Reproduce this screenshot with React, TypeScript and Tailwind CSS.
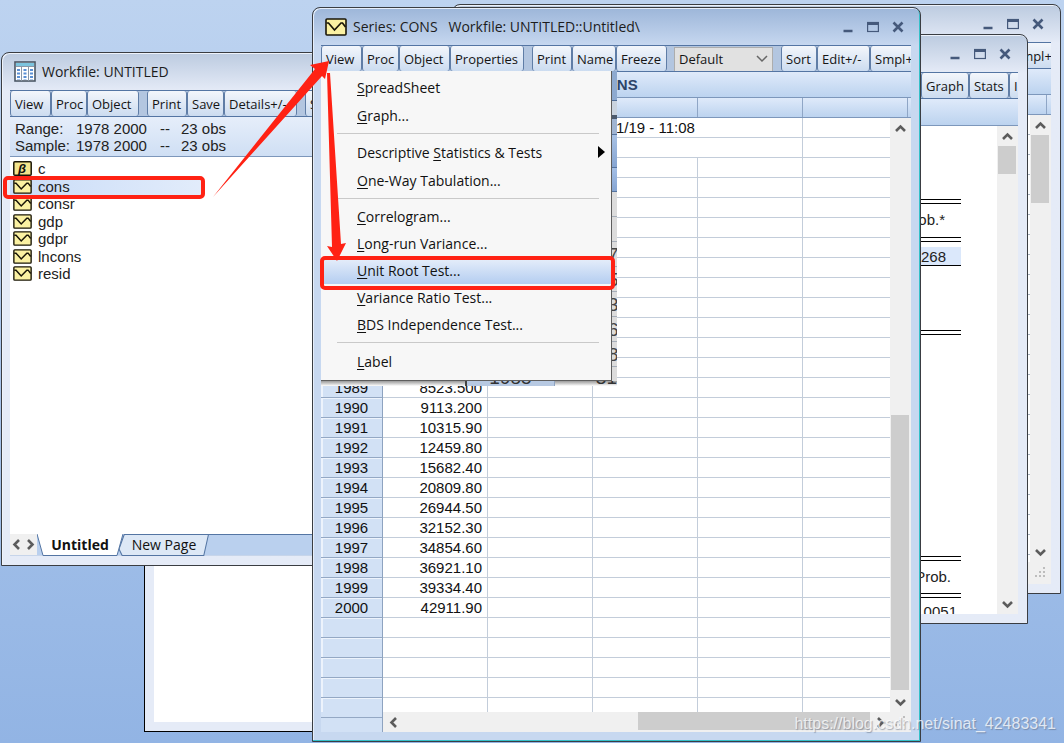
import React from 'react';
import { clsx } from 'clsx';

type Tool = { label: string; width: string; gap?: boolean };

const SERIES_TOOLS: Tool[] = [
  { label: 'View', width: 'w-[41px]' },
  { label: 'Proc', width: 'w-[37px]' },
  { label: 'Object', width: 'w-[51px]' },
  { label: 'Properties', width: 'w-[74px]' },
  { label: 'Print', width: 'w-[40px]', gap: true },
  { label: 'Name', width: 'w-[44px]' },
  { label: 'Freeze', width: 'w-[51px]' },
];

const SERIES_TOOLS_RIGHT: Tool[] = [
  { label: 'Sort', width: 'w-[36px]', gap: true },
  { label: 'Edit+/-', width: 'w-[53px]' },
  { label: 'Smpl+', width: 'w-[56px]' },
];

const WORKFILE_TOOLS: Tool[] = [
  { label: 'View', width: 'w-[41px]' },
  { label: 'Proc', width: 'w-[36px]' },
  { label: 'Object', width: 'w-[52px]' },
  { label: 'Print', width: 'w-[40px]', gap: true },
  { label: 'Save', width: 'w-[37px]' },
  { label: 'Details+/-', width: 'w-[73px]' },
  { label: 'Show', width: 'w-[44px]', gap: true },
];

const OBJECTS = ['c', 'cons', 'consr', 'gdp', 'gdpr', 'lncons', 'resid'];

const ROWS = [
  ['1989', '8523.500'],
  ['1990', '9113.200'],
  ['1991', '10315.90'],
  ['1992', '12459.80'],
  ['1993', '15682.40'],
  ['1994', '20809.80'],
  ['1995', '26944.50'],
  ['1996', '32152.30'],
  ['1997', '34854.60'],
  ['1998', '36921.10'],
  ['1999', '39334.40'],
  ['2000', '42911.90'],
];

const MENU = [
  [['S', 'preadSheet'], ['G', 'raph...']],
  [['S', 'tatistics & Tests', 'Descriptive '], ['O', 'ne-Way Tabulation...']],
  [['C', 'orrelogram...'], ['L', 'ong-run Variance...'], ['U', 'nit Root Test...'], ['V', 'ariance Ratio Test...'], ['B', 'DS Independence Test...']],
  [['L', 'abel']],
];

const CHEVRONS = {
  up: 'M2 9 L6.5 4.500 L11 9',
  down: 'M2 4 L6.500 8.500 L11 4',
  left: 'M9 2 L4.500 6.500 L9 11',
  right: 'M4 2 L8.500 6.500 L4 11',
};

const Chevron = ({ dir }: { dir: keyof typeof CHEVRONS }) => (
  <svg viewBox="0 0 13 13" className="w-[13px] h-[13px]" fill="none" stroke="#5c5c5c" strokeWidth="2.6">
    <path d={CHEVRONS[dir]} />
  </svg>
);

const SeriesIcon = ({ className }: { className: string }) => (
  <svg viewBox="0 0 22 18" className={className} preserveAspectRatio="none" fill="none" stroke="#1a1608">
    <rect x="1" y="1" width="20" height="16" rx="1" fill="#fbf1a2" strokeWidth="1.6" />
    <path d="M1.500 5 L3.500 5 L9.500 12 L16 5 L17.500 5 L20.500 9" strokeWidth="1.7" />
  </svg>
);

const BetaIcon = () => (
  <svg viewBox="0 0 19 15" className="w-[19px] h-[15px] shrink-0">
    <rect x="0.8" y="0.8" width="17.400" height="13.400" rx="1" fill="#f4e58c" stroke="#1a1608" strokeWidth="1.500" />
    <text x="5" y="11.500" fontSize="13" fontWeight="700" fontStyle="italic" fontFamily="Liberation Sans, sans-serif" fill="#111">β</text>
  </svg>
);

const WorkfileIcon = () => (
  <svg viewBox="0 0 22 21" className="w-[22px] h-[21px]">
    <rect x="1" y="1" width="20" height="19" fill="#fff" stroke="#4b5866" strokeWidth="1.600" />
    <rect x="2" y="2" width="18" height="3" fill="#7cc4de" />
    <path d="M2 5.500h18M7.500 6v14M14.500 6v14" stroke="#8a98a8" />
    <path d="M4.500 8v11M11 8v11M17.500 8v11" stroke="#5b90d4" strokeWidth="3" strokeDasharray="2 1.500" />
  </svg>
);

const Grip = () => (
  <svg viewBox="0 0 12 12" className="w-3 h-3" fill="#bdbdbd">
    <path d="M8 0h2v2h-2zM4 4h2v2h-2zM8 4h2v2h-2zM0 8h2v2h-2zM4 8h2v2h-2zM8 8h2v2h-2z" />
  </svg>
);

const WindowButtons = () => (
  <div className="ml-auto flex items-center gap-[13px] text-[#45597b]">
    <button aria-label="Minimize" className="w-3 h-3">
      <svg viewBox="0 0 12 12" className="w-3 h-3"><path d="M1.500 10h9" stroke="currentColor" strokeWidth="2.500" /></svg>
    </button>
    <button aria-label="Maximize" className="w-3 h-3">
      <svg viewBox="0 0 12 12" className="w-3 h-3" fill="none" stroke="currentColor">
        <rect x="0.600" y="1.500" width="10.800" height="9" strokeWidth="1.200" />
        <path d="M0 2.500h12" strokeWidth="3" />
      </svg>
    </button>
    <button aria-label="Close" className="w-3 h-3">
      <svg viewBox="0 0 12 12" className="w-3 h-3" fill="none" stroke="currentColor" strokeWidth="2.600">
        <path d="M1.500 1.500l9 9M10.500 1.500l-9 9" />
      </svg>
    </button>
  </div>
);

type WindowProps = {
  title?: string;
  icon?: React.ReactNode;
  active?: boolean;
  className: string;
  children: React.ReactNode;
};

const Window = ({ title, icon, active, className, children }: WindowProps) => (
  <section
    className={clsx(
      'absolute flex flex-col rounded-t-lg border border-[#3a3d42] pl-2 pr-[9px] pb-[9px]',
      active
        ? 'bg-[#c7d8f0] bg-linear-to-b from-[#9db6d9] to-[#c7d8f0] to-[38px] shadow-[inset_-1px_-1px_0_#35c0c8,inset_1px_1px_0_#e6eefa]'
        : 'bg-[#e5ebf7] bg-linear-to-b from-[#bccbe0] to-[#e5ebf7] to-[38px] shadow-[inset_1px_1px_0_#eef3fb]',
      className,
    )}
  >
    <header className="flex h-[37px] shrink-0 items-center gap-[6px] pl-1 pr-[7px] text-[14px] whitespace-pre text-[#1c1c1c]">
      {icon}
      <h2>{title}</h2>
      <WindowButtons />
    </header>
    {children}
  </section>
);

const ToolButton = ({ tool }: { tool: Tool }) => (
  <button
    className={clsx(
      'h-full shrink-0 overflow-hidden rounded-[3px] border-x border-[#5f7da6] bg-linear-to-b from-[#f3f6fb] to-[#ccdcf0] pl-1 text-left text-[13px] leading-6 text-[#151515]',
      tool.width,
      tool.gap && 'ml-2',
    )}
  >
    {tool.label}
  </button>
);

const Toolbar = ({ children, end }: { children: React.ReactNode; end?: boolean }) => (
  <div
    className={clsx(
      'flex h-[27px] shrink-0 overflow-hidden border-y border-[#5475a3] bg-[#b3c6e0]',
      end && 'justify-end',
    )}
  >
    {children}
  </div>
);

const VScroll = ({ thumb }: { thumb: string }) => (
  <div className="flex w-[21px] shrink-0 flex-col bg-[#f0f0f0] px-[1px]">
    <button aria-label="Scroll up" className="flex h-5 items-center justify-center"><Chevron dir="up" /></button>
    <div className="flex-1">
      <div className={clsx('bg-[#cdcdcd]', thumb)} />
    </div>
    <button aria-label="Scroll down" className="flex h-5 items-center justify-center"><Chevron dir="down" /></button>
  </div>
);

const BAND = 'shrink-0 border-b border-[#7d97bb] bg-linear-to-b from-[#dfeafa] to-[#bcd3ef]';
const CELL = 'border-r border-b border-[#c3cdda]';
const ROW_HEAD = 'h-5 border-r border-b border-r-[#8ea3c0] border-b-[#94a8c4] bg-[#d2e1f5] shadow-[inset_2px_1px_0_#edf3fc] font-normal';

const SeriesTable = () => (
  <table className="w-full table-fixed border-separate border-spacing-0 text-[15px] leading-[19px] text-[#111]">
    <colgroup>
      <col className="w-[62px]" />
      <col className="w-[105px]" />
      <col className="w-[105px]" />
      <col className="w-[105px]" />
      <col className="w-[105px]" />
      <col />
    </colgroup>
    <tbody>
      <tr>
        <th className={ROW_HEAD} />
        <td colSpan={4} className={clsx(CELL, 'py-0 pl-[233px]')}>1/19 - 11:08</td>
        <td className="border-b border-[#c3cdda]" />
      </tr>
      <tr>
        <th className={ROW_HEAD} />
        <td colSpan={4} className={CELL} />
        <td className="border-b border-[#c3cdda]" />
      </tr>
      {[...Array(11).fill(['', '']), ...ROWS, ...Array(5).fill(['', ''])].map(([year, value], i) => (
        <tr key={i}>
          <th scope="row" className={ROW_HEAD}>{year}</th>
          <td className={clsx(CELL, 'pr-[5px] text-right')}>{value}</td>
          <td className={CELL} />
          <td className={CELL} />
          <td className={CELL} />
          <td className="border-b border-[#c3cdda]" />
        </tr>
      ))}
    </tbody>
  </table>
);

const ViewMenu = () => (
  <div className="absolute top-[63px] left-2 grid grid-cols-[291px_5px] grid-rows-[310px_5px] overflow-hidden bg-white">
    <ul role="menu" className="border-r border-b border-[#5e5e5e] bg-[#f7f7f7] pt-[2px] text-[14px] text-[#111]">
      {MENU.map((group, g) => (
        <li key={g} role="none">
          {g > 0 && <hr className="my-1 mr-3 ml-4 border-[#c9c9c9]" />}
          <ul role="none">
            {group.map(([key, rest, lead]) => (
              <li key={rest} role="none">
                <button
                  role="menuitem"
                  className={clsx(
                    'flex w-full items-center pl-9 pr-[6px] whitespace-pre',
                    g === 2 ? 'h-[27px]' : 'h-7',
                    key === 'U' && 'bg-linear-to-b from-[#e9f0fb] to-[#b4cdf0]',
                  )}
                >
                  {lead}
                  <span className="underline underline-offset-2">{key}</span>
                  {rest}
                  {lead && (
                    <svg viewBox="0 0 7 12" className="ml-auto h-3 w-[7px]"><path d="M0 0l7 6-7 6z" /></svg>
                  )}
                </button>
              </li>
            ))}
          </ul>
        </li>
      ))}
    </ul>
    {/* slice of the sheet showing past the right edge of the menu */}
    <div className="flex flex-col overflow-hidden bg-[#dcdcdc] font-[Liberation_Sans] text-[19px] leading-[25px] text-[#444]">
      <div className="h-[30px] shrink-0 border-b border-[#4d6c98] bg-[#8eaad0]" />
      <div className="h-[14px] shrink-0 bg-[#c9d3df]" />
      <div className="h-[4px] shrink-0 bg-[#4b5a6e]" />
      <div className="h-[16px] shrink-0 border-b border-[#55749f] bg-[#9fb4d2]" />
      <div className="h-[33px] shrink-0 border-b border-[#55749f] bg-linear-to-b from-[#a9c2e4] to-[#86a5d2]" />
      <div className="h-6 shrink-0 border-b border-[#55749f] bg-linear-to-b from-[#a4bfe6] to-[#86a5d2]" />
      <div className="h-[25px] shrink-0 border-b border-[#a5adb8]" />
      <div className="h-[25px] shrink-0 border-b border-[#a5adb8]" />
      {['7', '5', '3', '6', '8'].map((d) => (
        <div key={d} className="-ml-1 h-[25px] shrink-0 border-b border-[#a5adb8]">{d}</div>
      ))}
    </div>
    <div className="col-span-2 flex items-end bg-linear-to-b from-[#9a9a9a] to-white">
      <div className="ml-[144px] h-full w-[2px] bg-[#444]" />
      <div className="flex h-full w-[88px] items-end justify-center overflow-hidden border-r border-[#8ea3c0] bg-[#b7c9e2] font-[Liberation_Sans] text-[19px] leading-[16px] text-[#333]">1985</div>
      <div className="flex h-full flex-1 items-end justify-end overflow-hidden font-[Liberation_Sans] text-[19px] leading-[16px] text-[#333]">31</div>
    </div>
  </div>
);

const SeriesWindow = () => (
  <Window
    active
    title={'Series: CONS   Workfile: UNTITLED::Untitled\\'}
    icon={<SeriesIcon className="w-[22px] h-[18px]" />}
    className="top-[7px] left-[312px] h-[735px] w-[609px]"
  >
    <Toolbar>
      {SERIES_TOOLS.map((tool) => <ToolButton key={tool.label} tool={tool} />)}
      <div className="relative ml-[7px] w-[99px] shrink-0">
        <select aria-label="Display" className="h-full w-full appearance-none border border-[#adadad] bg-[#e1e1e1] pl-1 text-[13px] text-[#151515]">
          <option>Default</option>
        </select>
        <svg viewBox="0 0 12 8" className="pointer-events-none absolute top-[9px] right-[5px] h-2 w-3" fill="none" stroke="#666" strokeWidth="1.500">
          <path d="M1 1l5 5 5-5" />
        </svg>
      </div>
      {SERIES_TOOLS_RIGHT.map((tool) => <ToolButton key={tool.label} tool={tool} />)}
    </Toolbar>
    <div className={clsx(BAND, 'h-[26px] text-center font-[Liberation_Sans] text-[15px] leading-[25px] font-bold text-[#2d4468]')}>CONS</div>
    <div className={clsx(BAND, 'grid h-5 grid-cols-[62px_105px_105px_105px_105px_105px] divide-x divide-[#8fa6c6]')}>
      <i /><i /><i /><i /><i /><i className="border-r border-[#8fa6c6]" />
    </div>
    <div className="flex min-h-0 flex-1 bg-white font-[Liberation_Sans]">
      <div className="flex-1 overflow-hidden"><SeriesTable /></div>
      <VScroll thumb="mt-[277px] h-[275px] w-[18px]" />
    </div>
    <div className="flex h-5 shrink-0">
      <div className="flex w-[62px] flex-col border-r border-[#8ea3c0] bg-[#d2e1f5]">
        <div className="h-[6px] border-b border-[#94a8c4]" />
      </div>
      <div className="flex flex-1 items-center bg-[#f0f0f0]">
        <button aria-label="Scroll left" className="flex w-5 justify-center"><Chevron dir="left" /></button>
        <div className="flex h-full flex-1 justify-end">
          <div className="h-[18px] w-[232px] bg-[#cdcdcd]" />
        </div>
        <button aria-label="Scroll right" className="flex w-5 justify-center"><Chevron dir="right" /></button>
        <div className="flex w-[21px] justify-center"><Grip /></div>
      </div>
    </div>
    <ViewMenu />
  </Window>
);

const PageTab = ({ label, width, current }: { label: string; width: string; current?: boolean }) => (
  <button className={clsx('relative -mr-1 h-[22px] text-[14px] leading-[22px] text-[#111]', width, current && 'z-10 font-bold')}>
    <svg viewBox="0 0 86 22" preserveAspectRatio="none" className="absolute inset-0 h-full w-full" stroke="#5475a3">
      <path d={current ? 'M0 0L6 21.500H80L86 0' : 'M0 15L5 0.500H85.500L81 21.500H3z'} fill={current ? '#fff' : '#dde8f6'} />
    </svg>
    <span className="relative">{label}</span>
  </button>
);

const WorkfileWindow = () => (
  <Window
    title="Workfile: UNTITLED"
    icon={<WorkfileIcon />}
    className="top-[52px] left-[1px] h-[514px] w-[420px]"
  >
    <Toolbar>
      {WORKFILE_TOOLS.map((tool) => <ToolButton key={tool.label} tool={tool} />)}
    </Toolbar>
    <div className="h-10 shrink-0 border-b border-[#7d97bb] bg-linear-to-b from-[#e6eefa] to-[#cfdff4] pt-[3px] pl-[5px] font-[Liberation_Sans] text-[15px] leading-[17px] text-[#222]">
      <p className="flex"><span className="w-[61px]">Range:</span><span className="w-[84px]">1978 2000</span><span className="w-[21px]">--</span>23 obs</p>
      <p className="flex"><span className="w-[61px]">Sample:</span><span className="w-[84px]">1978 2000</span><span className="w-[21px]">--</span>23 obs</p>
    </div>
    <div className="min-h-0 flex-1 bg-white pt-[3px]">
      <ul className="flex h-[122px] flex-col justify-between font-[Liberation_Sans] text-[15px] leading-[17px] text-[#222]">
        {OBJECTS.map((name) => (
          <li
            key={name}
            className={clsx(
              'flex h-[17px] w-[193px] items-center gap-[6px] pl-[3px]',
              name === 'cons' && 'bg-linear-to-r from-[#c9dcf7] to-[#e2ecfb]',
            )}
          >
            {name === 'c' ? <BetaIcon /> : <SeriesIcon className="w-[19px] h-[15px] shrink-0" />}
            {name}
          </li>
        ))}
      </ul>
    </div>
    <div className="flex h-[22px] shrink-0 border-b border-[#c7d5ea] bg-[#bad0ee]">
      <div className="flex w-[27px] items-center justify-between bg-[#f0f0f0]">
        <button aria-label="Previous page"><Chevron dir="left" /></button>
        <button aria-label="Next page"><Chevron dir="right" /></button>
      </div>
      <PageTab label="Untitled" width="w-[86px]" current />
      <PageTab label="New Page" width="w-[90px]" />
      <div className="flex-1 border-t border-[#5475a3]" />
    </div>
  </Window>
);

const DoubleRule = ({ className }: { className?: string }) => (
  <div className={clsx('h-[5px] shrink-0 border-y border-black', className)} />
);

const ResultsWindow = () => (
  <Window className="top-[34px] left-[520px] h-[590px] w-[508px]">
    <Toolbar end>
      <ToolButton tool={{ label: 'Graph', width: 'w-[48px]' }} />
      <ToolButton tool={{ label: 'Stats', width: 'w-[40px]' }} />
      <div className="flex w-[9px] shrink-0 overflow-hidden">
        <ToolButton tool={{ label: 'Ident', width: 'w-[44px]' }} />
      </div>
    </Toolbar>
    <div className={clsx(BAND, 'h-[27px]')} />
    <div className="flex min-h-0 flex-1 bg-white">
      <div className="flex flex-1 flex-col overflow-hidden pr-9 text-right font-[Liberation_Sans] text-[15px] text-[#222]">
        <DoubleRule className="mt-[73px]" />
        <p className="h-[33px] shrink-0 pr-4 leading-[31px]">Prob.*</p>
        <DoubleRule />
        <p className="mt-[5px] h-[19px] shrink-0 border-b border-black bg-[#dbe8fb] pr-[15px] leading-[19px]">268</p>
        <DoubleRule className="mt-[64px]" />
        <DoubleRule className="mt-[221px]" />
        <p className="h-[32px] shrink-0 pr-[10px] leading-[31px]">Prob.</p>
        <DoubleRule />
        <p className="mt-[5px] shrink-0 pr-1 leading-[18px]">0.0051</p>
      </div>
      <VScroll thumb="h-[28px] w-[18px]" />
    </div>
  </Window>
);

const BackSheetWindow = () => (
  <Window className="top-[4px] left-[452px] h-[590px] w-[609px]">
    <Toolbar end>
      <div className="flex w-[42px] shrink-0 overflow-hidden">
        <ToolButton tool={{ label: 'Smpl+', width: 'w-[56px]' }} />
      </div>
    </Toolbar>
    <div className={clsx(BAND, 'h-[26px]')} />
    <div className={clsx(BAND, 'h-5 pr-1')}>
      <div className="h-full border-r border-[#8fa6c6]" />
    </div>
    <div className="flex min-h-0 flex-1 bg-white">
      <div className="flex-1 overflow-hidden">
        {Array.from({ length: 24 }, (_, i) => <div key={i} className="h-5 border-b border-[#aab4c2]" />)}
      </div>
      <VScroll thumb="h-[68px] w-[18px]" />
    </div>
    <div className="flex h-[22px] shrink-0 items-center justify-end bg-[#f0f0f0] pr-1"><Grip /></div>
  </Window>
);

const Annotations = () => (
  <svg className="pointer-events-none absolute inset-0 h-full w-full" fill="none">
    <g stroke="#ff2214" strokeWidth="4">
      <rect x="5" y="178" width="198" height="19" rx="3" />
      <rect x="322" y="258" width="291" height="30" rx="3" />
    </g>
    <g fill="#ff2214">
      <path d="M213 197L315 69 310 65 329 61 325 79 322 76z" />
      <path d="M327 73h3L341 244 346 243 337 261 327 246 332 247z" />
    </g>
  </svg>
);

export default function App() {
  return (
    <main className="relative h-screen w-full overflow-hidden bg-linear-to-b from-[#bdd3f0] to-[#92b4e4] font-[Open_Sans,sans-serif]">
      <BackSheetWindow />
      <ResultsWindow />
      <section className="absolute top-[480px] left-[144px] flex h-[252px] w-[300px] border border-black bg-[#e5ebf7] p-[9px]">
        <div className="flex-1 bg-white" />
      </section>
      <WorkfileWindow />
      <SeriesWindow />
      <Annotations />
      <p className="absolute right-2 bottom-[10px] font-[Liberation_Sans] text-[16px] leading-[18px] text-white/75 [text-shadow:1px_1px_1px_rgba(90,100,120,0.5)]">
        https://blog.csdn.net/sinat_42483341
      </p>
    </main>
  );
}
